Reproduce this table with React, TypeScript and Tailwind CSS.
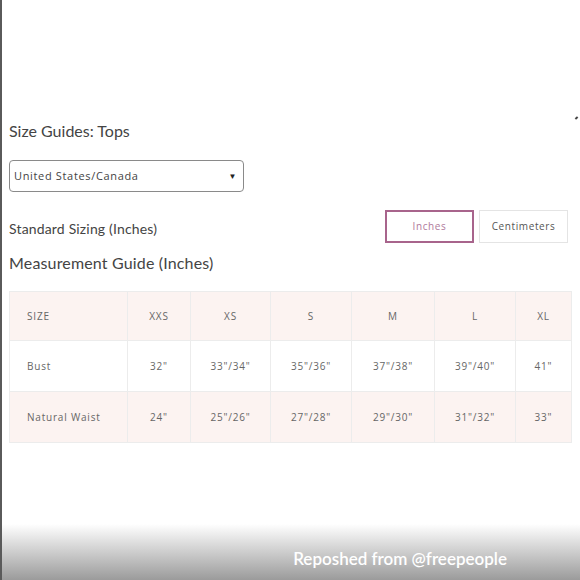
const columns = ['SIZE', 'XXS', 'XS', 'S', 'M', 'L', 'XL'];
const widths = ['w-[118px]', 'w-[63px]', 'w-[80px]', 'w-[81px]', 'w-[83px]', 'w-[81px]', 'w-[56px]'];

const rows = [
    { label: 'Bust', values: ['32"', '33"/34"', '35"/36"', '37"/38"', '39"/40"', '41"'], bg: 'bg-white' },
    { label: 'Natural Waist', values: ['24"', '25"/26"', '27"/28"', '29"/30"', '31"/32"', '33"'], bg: 'bg-[#fcf3f1]' },
];

function SizeTable() {
    return (
        <table className="mt-[18px] w-[562px] table-fixed border-collapse text-[10px] tracking-[0.08em] text-[#666]" style={{ fontFamily: '"Open Sans", sans-serif' }}>
            <thead>
                <tr className="h-[49px] bg-[#fcf3f1]">
                    {columns.map((c, i) => (
                        <th key={c} className={`${widths[i]} border border-[#ececec] font-normal ${i === 0 ? 'pl-[17px] text-left' : 'text-center'}`}>
                            {c}
                        </th>
                    ))}
                </tr>
            </thead>
            <tbody>
                {rows.map((r) => (
                    <tr key={r.label} className={`h-[51px] ${r.bg}`}>
                        <td className="border border-[#ececec] pl-[17px]">{r.label}</td>
                        {r.values.map((v, i) => (
                            <td key={i} className="border border-[#ececec] text-center">{v}</td>
                        ))}
                    </tr>
                ))}
            </tbody>
        </table>
    );
}

export default function App() {
    return (
        <div className="relative h-[580px] w-[580px] overflow-hidden border-l-2 border-[#5a5a5a] bg-white">
            <div className="flex flex-col pl-[7px] pt-[121px]">
                <h1 className="text-[16px] leading-[20px] text-[#444]" style={{ fontFamily: 'Lato, sans-serif' }}>
                    Size Guides: Tops
                </h1>

                {/* country select */}
                <div className="mt-[19px] flex h-[32px] w-[235px] items-center justify-between rounded-[4px] border border-[#8a8a8a] pl-[4px] pr-[6px] text-[11px] tracking-[0.06em] text-[#444]" style={{ fontFamily: '"Open Sans", sans-serif' }}>
                    <span>United States/Canada</span>
                    <span className="text-[8px] text-[#222]">▼</span>
                </div>

                <div className="mt-[18px] flex w-[559px] items-center justify-between">
                    <span className="pt-[3px] text-[14px] tracking-[0.012em] text-[#444]" style={{ fontFamily: 'Lato, sans-serif' }}>
                        Standard Sizing (Inches)
                    </span>
                    <div className="flex gap-[5px] text-[10px] tracking-[0.06em]" style={{ fontFamily: '"Open Sans", sans-serif' }}>
                        <button className="flex h-[33px] w-[89px] items-center justify-center border-2 border-[#a8648c] text-[#b07a9c]">
                            Inches
                        </button>
                        <button className="flex h-[33px] w-[89px] items-center justify-center border border-[#e4e4e4] text-[#555]">
                            Centimeters
                        </button>
                    </div>
                </div>

                <h2 className="mt-[10px] text-[16px] leading-[20px] tracking-[0.01em] text-[#444]" style={{ fontFamily: 'Lato, sans-serif' }}>
                    Measurement Guide (Inches)
                </h2>

                <SizeTable />
            </div>

            {/* tiny mark top right */}
            <div className="absolute left-[573px] top-[117px] h-[2px] w-[3px] rotate-[-40deg] bg-[#444]" />

            {/* repost footer */}
            <div className="absolute bottom-0 left-0 flex h-[56px] w-full items-end justify-end bg-gradient-to-b from-white/0 to-[#9b9b9b] pb-[9px] pr-[73px]">
                <span className="text-[17px] font-semibold text-white" style={{ fontFamily: 'Lato, sans-serif' }}>
                    Reposhed from @freepeople
                </span>
            </div>
        </div>
    );
}
